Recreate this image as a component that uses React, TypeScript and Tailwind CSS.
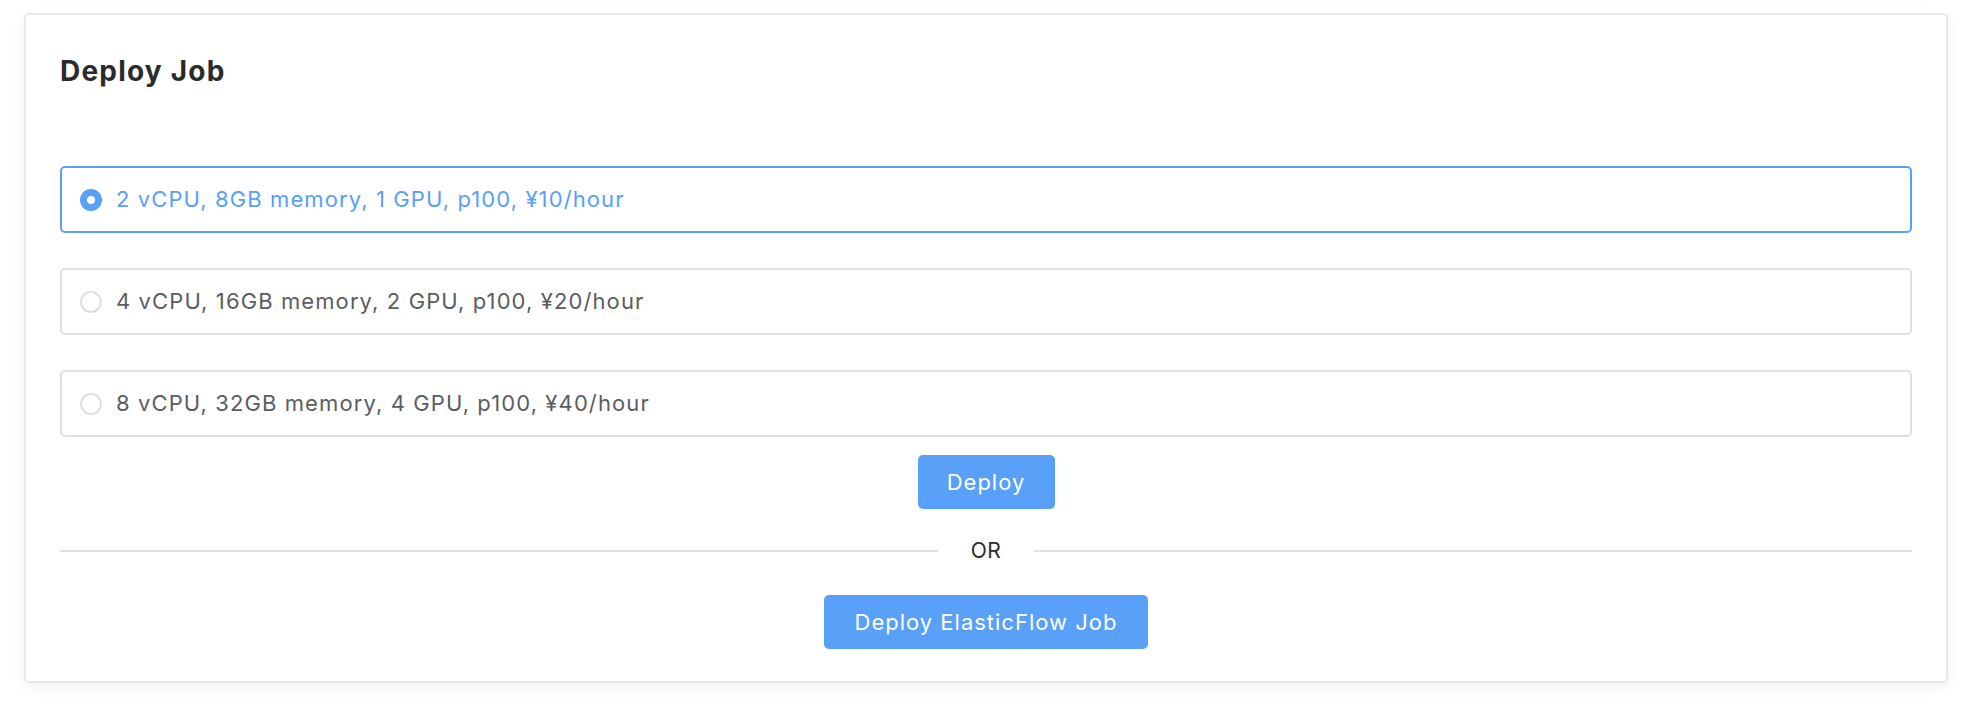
import { useState } from 'react';

const plans = [
  '2 vCPU, 8GB memory, 1 GPU, p100, ¥10/hour',
  '4 vCPU, 16GB memory, 2 GPU, p100, ¥20/hour',
  '8 vCPU, 32GB memory, 4 GPU, p100, ¥40/hour',
];

const App = () => {
  const [selected, setSelected] = useState(0);

  return (
    <div className="min-h-screen bg-white pl-6 pr-[30px] pt-[13px] font-['Inter',sans-serif]">
      <div className="rounded-[5px] border-2 border-[#e6e8eb] bg-white px-[34px] pt-[38px] pb-[32px] shadow-[0_4px_16px_rgba(0,0,0,0.06)]">
        <h2 className="text-[28px] font-bold leading-[36px] tracking-[1.2px] text-[#2b2b2b]">Deploy Job</h2>

        <div className="mt-[77px] flex flex-col gap-[35px]">
          {plans.map((plan, i) => {
            const active = selected === i;
            return (
              <label
                key={plan}
                onClick={() => setSelected(i)}
                className={`flex h-[67px] cursor-pointer items-center rounded-[5px] border-2 px-[18px] ${
                  active ? 'border-[#58a0f8]' : 'border-[#dcdfe6]'
                }`}
              >
                {active ? (
                  <span className="flex h-[22px] w-[22px] items-center justify-center rounded-full bg-[#58a0f8]">
                    <span className="h-[8px] w-[8px] rounded-full bg-white" />
                  </span>
                ) : (
                  <span className="h-[22px] w-[22px] rounded-full border-2 border-[#dcdfe6]" />
                )}
                <span
                  className={`ml-[14px] text-[22px] tracking-[1.1px] ${active ? 'text-[#58a0f8]' : 'text-[#5a5d61]'}`}
                >
                  {plan}
                </span>
              </label>
            );
          })}
        </div>

        <div className="mt-[18px] flex justify-center">
          <button className="h-[54px] w-[137px] rounded-[5px] bg-[#58a0f8] text-[22px] tracking-[1px] text-white">
            Deploy
          </button>
        </div>

        <div className="mt-[32px] flex items-center">
          <div className="h-[2px] flex-1 bg-[#dcdfe6]" />
          <span className="mx-[33px] text-[21px] leading-[20px] tracking-[0.5px] text-[#2b2b2b]">OR</span>
          <div className="h-[2px] flex-1 bg-[#dcdfe6]" />
        </div>

        <div className="mt-[34px] flex justify-center">
          <button className="h-[54px] w-[324px] rounded-[5px] bg-[#58a0f8] text-[22px] tracking-[1px] text-white">
            Deploy ElasticFlow Job
          </button>
        </div>
      </div>
    </div>
  );
};

export default App;
